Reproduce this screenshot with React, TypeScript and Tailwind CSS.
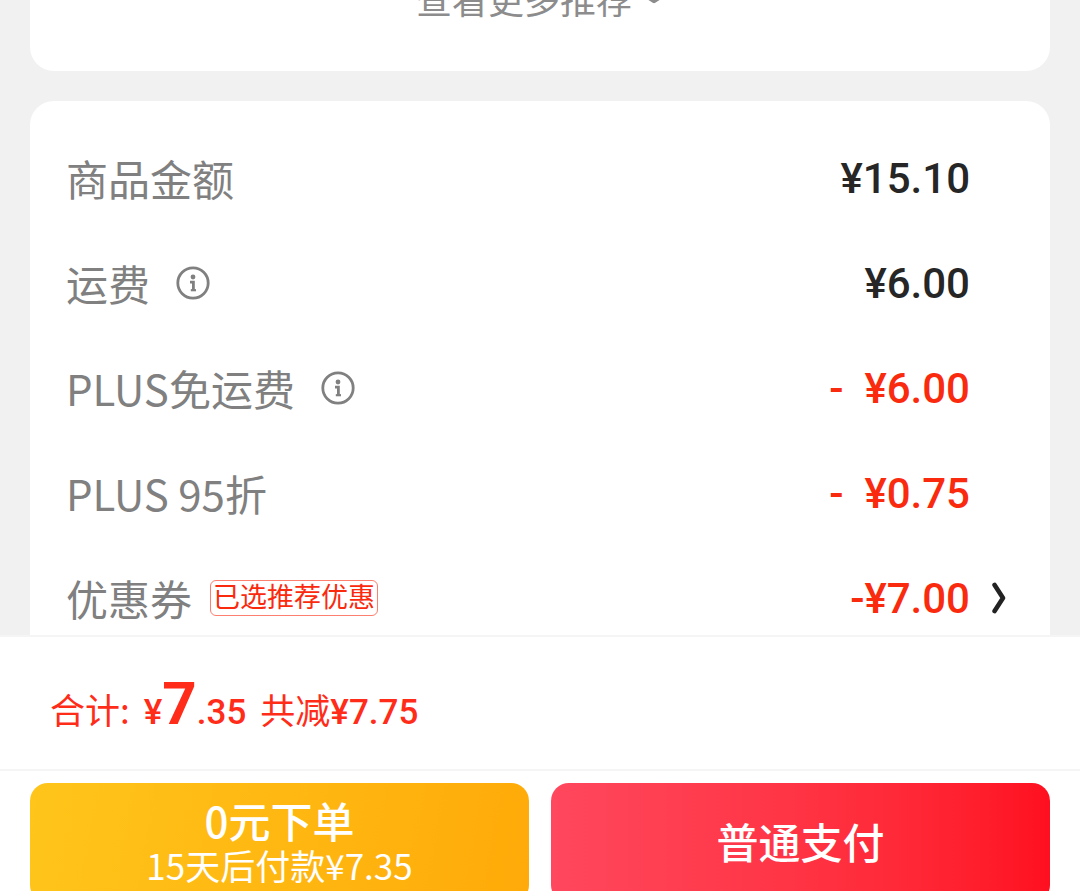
import { FC, PropsWithChildren, ReactNode } from "react";

const InfoButton: FC<Readonly<{ label: string }>> = ({ label }) => (
  <button type="button" aria-label={label} className="ml-[26px] size-[34px] text-[#808080]">
    <svg viewBox="0 0 34 34" className="size-full" fill="none" stroke="currentColor">
      <circle cx="17" cy="17" r="15.2" strokeWidth="2.8" />
      <circle cx="17" cy="11" r="2.4" fill="currentColor" stroke="none" />
      <path d="M14 16.2h3.4v8" strokeWidth="2.8" />
      <path d="M14.8 24.2h5.2" strokeWidth="2.2" />
    </svg>
  </button>
);

const ChevronRight = () => (
  <svg viewBox="0 0 14 32" className="h-8 w-3.5" fill="none" stroke="#222" strokeWidth="4.6" strokeLinecap="round" strokeLinejoin="round">
    <path d="M2.6 3l8.4 13-8.4 13" />
  </svg>
);

const ChevronDown = () => (
  <svg viewBox="0 0 20 12" className="h-3 w-5" fill="none" stroke="currentColor" strokeWidth="4.5" strokeLinecap="round" strokeLinejoin="round">
    <path d="M2.5 4l7.5 5 7.5-5" />
  </svg>
);

type RowProps = PropsWithChildren<{
  label: string;
  amount: string;
  discount?: boolean;
  action?: ReactNode;
}>;

const Row: FC<Readonly<RowProps>> = ({ label, amount, discount, action, children }) => (
  <div className="flex h-[105px] items-center">
    <dt className="flex items-center text-[42px] leading-[60px] text-[#808080]">
      {label}
      {children}
    </dt>
    <dd
      className={`ml-auto whitespace-pre pt-0.5 font-[Roboto,sans-serif] text-[42px] leading-[48px] font-medium ${
        discount ? "text-[#fa2a0f]" : "text-[#262626]"
      }`}
    >
      {amount}
    </dd>
    <dd className="flex w-20 items-center pl-[22px]">{action}</dd>
  </div>
);

export default function App() {
  return (
    <div className="flex h-screen flex-col overflow-hidden bg-[#f1f1f1] font-['Noto_Sans_CJK_SC',sans-serif]">
      <main className="min-h-0 flex-1 overflow-hidden px-[30px]">
        <section className="-mt-[26px] rounded-b-3xl bg-white pb-[49px]">
          <button type="button" className="mx-auto flex h-12 items-center gap-3 text-4xl text-[#8c8c8c]">
            查看更多推荐
            <ChevronDown />
          </button>
        </section>

        <section className="mt-[30px] rounded-3xl bg-white pt-6 pb-10">
          <dl className="pl-9">
            <Row label="商品金额" amount="¥15.10" />
            <Row label="运费" amount="¥6.00">
              <InfoButton label="运费说明" />
            </Row>
            <Row label="PLUS免运费" amount="-  ¥6.00" discount>
              <InfoButton label="PLUS免运费说明" />
            </Row>
            <Row label="PLUS 95折" amount="-  ¥0.75" discount />
            <Row
              label="优惠券"
              amount="-¥7.00"
              discount
              action={
                <button type="button" aria-label="选择优惠券">
                  <ChevronRight />
                </button>
              }
            >
              <span className="ml-[18px] flex h-9 items-center rounded-md border border-[#fa2a0f]/60 px-0.5 pb-1 text-[27px] leading-none text-[#fa2a0f]">
                已选推荐优惠
              </span>
            </Row>
          </dl>
        </section>
      </main>

      <footer className="-mb-3 shrink-0 border-t-2 border-[#f5f5f5] bg-white">
        <p className="flex h-[132px] items-baseline gap-3.5 px-[50px] pt-[22px] text-[35px] text-[#ff2c19]">
          <span>合计:</span>
          <span className="font-[Roboto,sans-serif] font-medium">
            ¥<span className="text-[60px] font-bold">7</span>.35
          </span>
          <span>
            共减<span className="font-[Roboto,sans-serif] font-medium">¥7.75</span>
          </span>
        </p>
        <div className="grid grid-cols-2 gap-[22px] border-t-2 border-[#f5f5f5] px-[30px] pt-3">
          <button
            type="button"
            className="flex h-[120px] flex-col items-center justify-center rounded-[18px] bg-linear-[100deg] from-[#ffc51a] to-[#ffaa08] pb-1 text-white"
          >
            <span className="text-[42px] leading-[48px] font-medium">0元下单</span>
            <span className="text-[35px] leading-[42px]">15天后付款¥7.35</span>
          </button>
          <button
            type="button"
            className="h-[120px] rounded-[18px] bg-linear-to-r from-[#ff475d] to-[#ff0f20] pb-1.5 text-[42px] font-medium text-white"
          >
            普通支付
          </button>
        </div>
      </footer>
    </div>
  );
}
